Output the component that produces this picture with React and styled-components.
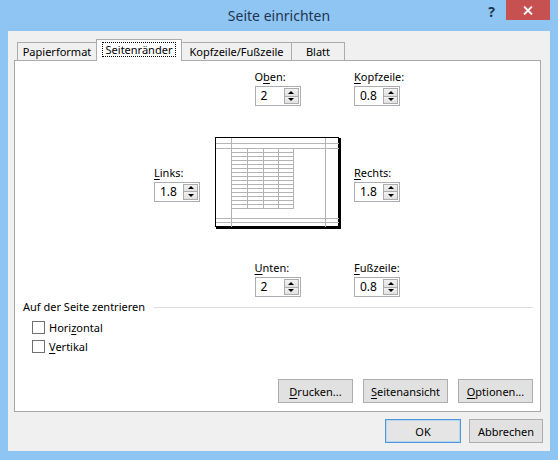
import React from 'react';
import styled, { createGlobalStyle } from 'styled-components';

const Global = createGlobalStyle`
  html, body { margin: 0; padding: 0; background: #8ec5f3; }
  body { font-family: "Noto Sans", "Open Sans", sans-serif; font-size: 11px; color: #000; }
  * { box-sizing: border-box; }
`;

const Window = styled.div`
  width: 558px;
  height: 460px;
  background: #8ec5f3;
  display: flex;
  flex-direction: column;
  padding: 0 8px 9px 8px;
`;

const TitleBar = styled.div`
  height: 31px;
  display: grid;
  grid-template-columns: 1fr auto 1fr;
  align-items: start;
`;

const Title = styled.div`
  grid-column: 2;
  font-size: 14px;
  line-height: 31px;
  color: #1f3652;
`;

const Controls = styled.div`
  grid-column: 3;
  justify-self: end;
  display: flex;
  align-items: flex-start;
`;

const Help = styled.span`
  font-size: 14px;
  font-weight: 700;
  color: #1f3652;
  line-height: 20px;
  margin: 2px 11px 0 0;
`;

const Close = styled.div`
  width: 44px;
  height: 20px;
  background: #c75050;
  display: flex;
  align-items: center;
  justify-content: center;
`;

const Client = styled.div`
  flex: 1;
  background: #f0f0f0;
  display: flex;
  flex-direction: column;
  padding: 8px 7px 8px 6px;
`;

const TabStrip = styled.div`
  display: flex;
  align-items: flex-end;
  height: 22px;
  padding-left: 3px;
  margin-bottom: -1px;
  position: relative;
  z-index: 1;
`;

const Tab = styled.div`
  width: ${p => p.$width}px;
  height: ${p => (p.$active ? 22 : 19)}px;
  border: 1px solid #acacac;
  border-bottom: ${p => (p.$active ? 'none' : '1px solid #acacac')};
  background: ${p => (p.$active ? '#fff' : '#f0f0f0')};
  display: flex;
  align-items: center;
  justify-content: center;
  margin-left: ${p => (p.$first ? 0 : -1)}px;
  padding-bottom: ${p => (p.$active ? 2 : 0)}px;
  white-space: nowrap;
`;

const Focus = styled.span`
  border: 1px dotted #000;
  padding: 0 3px;
  line-height: 13px;
`;

const Panel = styled.div`
  flex: 1;
  background: #fff;
  border: 1px solid #a9a9a9;
  margin-right: 2px;
  display: flex;
  flex-direction: column;
  padding: 8px 7px 8px 8px;
`;

const MarginsGrid = styled.div`
  align-self: center;
  display: grid;
  grid-template-columns: 47px 125px 46px;
  grid-template-rows: auto 92px auto;
  column-gap: 14px;
  row-gap: 31px;
  margin-left: -2px;
`;

const Field = styled.div`
  grid-column: ${p => p.$col};
  grid-row: ${p => p.$row};
  justify-self: ${p => (p.$center ? 'center' : 'start')};
  align-self: center;
  display: flex;
  flex-direction: column;
  gap: 2px;
`;

const Label = styled.span`
  line-height: 15px;
  white-space: nowrap;
`;

const U = styled.span`
  text-decoration: underline;
  text-underline-offset: 2px;
`;

const SpinBox = styled.div`
  width: 46px;
  height: 20px;
  border: 1px solid #abadb3;
  background: #fff;
  display: flex;
  align-items: stretch;
  padding: 1px;
`;

const SpinValue = styled.span`
  flex: 1;
  padding-left: 4px;
  line-height: 16px;
  font-size: 12px;
`;

const SpinButtons = styled.div`
  width: 15px;
  display: flex;
  flex-direction: column;
`;

const SpinBtn = styled.div`
  flex: 1;
  border: 1px solid #acacac;
  margin-top: ${p => (p.$down ? -1 : 0)}px;
  background: linear-gradient(#f2f2f2, #e1e1e1);
  display: flex;
  align-items: center;
  justify-content: center;
`;

const Arrow = styled.span`
  width: 0;
  height: 0;
  border-left: 3px solid transparent;
  border-right: 3px solid transparent;
  ${p => (p.$down ? 'border-top: 3px solid #000;' : 'border-bottom: 3px solid #000;')}
`;

const PreviewCell = styled.div`
  grid-column: 2;
  grid-row: 2;
`;

const GroupHeader = styled.div`
  display: flex;
  align-items: center;
  gap: 9px;
  margin-top: 3px;
  line-height: 14px;
`;

const Rule = styled.div`
  flex: 1;
  height: 1px;
  background: #dcdcdc;
`;

const CheckList = styled.div`
  display: flex;
  flex-direction: column;
  padding-left: 9px;
  margin-top: 4px;
`;

const CheckRow = styled.label`
  display: flex;
  align-items: center;
  gap: 4px;
  height: 19px;
`;

const CheckBox = styled.span`
  width: 13px;
  height: 13px;
  border: 1px solid #707070;
  background: #fff;
`;

const ButtonRow = styled.div`
  margin-top: auto;
  display: flex;
  justify-content: flex-end;
  gap: 10px;
`;

const Footer = styled.div`
  margin-top: 7px;
  display: flex;
  justify-content: flex-end;
  gap: 8px;
`;

const Button = styled.button`
  width: ${p => p.$width}px;
  height: 24px;
  font: inherit;
  color: #000;
  background: ${p => (p.$default ? '#e5e5e5' : '#e1e1e1')};
  border: 1px solid ${p => (p.$default ? '#4f97d8' : '#adadad')};
  ${p => (p.$default ? 'box-shadow: inset 0 0 0 1px #b6d6f2;' : '')}
  padding: 0;
`;

const Spinner = ({ value }) => (
  <SpinBox>
    <SpinValue>{value}</SpinValue>
    <SpinButtons>
      <SpinBtn><Arrow /></SpinBtn>
      <SpinBtn $down><Arrow $down /></SpinBtn>
    </SpinButtons>
  </SpinBox>
);

const PagePreview = () => {
  const rows = [];
  for (let y = 15; y <= 71; y += 4) rows.push(y);
  const cols = [32, 48, 63, 78];
  return (
    <svg width="126" height="92" viewBox="0 0 126 92">
      <rect x="0.5" y="0.5" width="123" height="89" fill="#fff" stroke="#000" />
      <rect x="124" y="1" width="2" height="91" fill="#000" />
      <rect x="1" y="90" width="125" height="2" fill="#000" />
      <g stroke="#b4b4b4" strokeWidth="1" shapeRendering="crispEdges">
        <line x1="16.5" y1="1" x2="16.5" y2="90" />
        <line x1="110.5" y1="1" x2="110.5" y2="90" />
        <line x1="1" y1="6.5" x2="124" y2="6.5" />
        <line x1="1" y1="11.5" x2="124" y2="11.5" />
        <line x1="1" y1="81.5" x2="124" y2="81.5" />
        <line x1="1" y1="85.5" x2="124" y2="85.5" />
        {cols.map(x => (
          <line key={x} x1={x + 0.5} y1="11" x2={x + 0.5} y2="72" />
        ))}
        {rows.map(y => (
          <line key={y} x1="16" y1={y + 0.5} x2="79" y2={y + 0.5} />
        ))}
      </g>
    </svg>
  );
};

export default function App() {
  return (
    <>
      <Global />
      <Window>
        <TitleBar>
          <Title>Seite einrichten</Title>
          <Controls>
            <Help>?</Help>
            <Close>
              <svg width="10" height="9" viewBox="0 0 10 9">
                <path d="M1 0.5 L9 8.5 M9 0.5 L1 8.5" stroke="#fff" strokeWidth="1.8" />
              </svg>
            </Close>
          </Controls>
        </TitleBar>
        <Client>
          <TabStrip>
            <Tab $first $width={80}>Papierformat</Tab>
            <Tab $active $width={86}><Focus>Seitenränder</Focus></Tab>
            <Tab $width={111}>Kopfzeile/Fußzeile</Tab>
            <Tab $width={54}>Blatt</Tab>
          </TabStrip>
          <Panel>
            <MarginsGrid>
              <Field $col={2} $row={1} $center>
                <Label>O<U>b</U>en:</Label>
                <Spinner value="2" />
              </Field>
              <Field $col={3} $row={1}>
                <Label><U>K</U>opfzeile:</Label>
                <Spinner value="0.8" />
              </Field>
              <Field $col={1} $row={2}>
                <Label><U>L</U>inks:</Label>
                <Spinner value="1.8" />
              </Field>
              <PreviewCell>
                <PagePreview />
              </PreviewCell>
              <Field $col={3} $row={2}>
                <Label><U>R</U>echts:</Label>
                <Spinner value="1.8" />
              </Field>
              <Field $col={2} $row={3} $center>
                <Label><U>U</U>nten:</Label>
                <Spinner value="2" />
              </Field>
              <Field $col={3} $row={3}>
                <Label><U>F</U>ußzeile:</Label>
                <Spinner value="0.8" />
              </Field>
            </MarginsGrid>
            <GroupHeader>
              <span>Auf der Seite zentrieren</span>
              <Rule />
            </GroupHeader>
            <CheckList>
              <CheckRow><CheckBox /><span>Hori<U>z</U>ontal</span></CheckRow>
              <CheckRow><CheckBox /><span><U>V</U>ertikal</span></CheckRow>
            </CheckList>
            <ButtonRow>
              <Button $width={75}><U>D</U>rucken...</Button>
              <Button $width={85}><U>S</U>eitenansicht</Button>
              <Button $width={75}><U>O</U>ptionen...</Button>
            </ButtonRow>
          </Panel>
          <Footer>
            <Button $width={76} $default>OK</Button>
            <Button $width={74}>Abbrechen</Button>
          </Footer>
        </Client>
      </Window>
    </>
  );
}
